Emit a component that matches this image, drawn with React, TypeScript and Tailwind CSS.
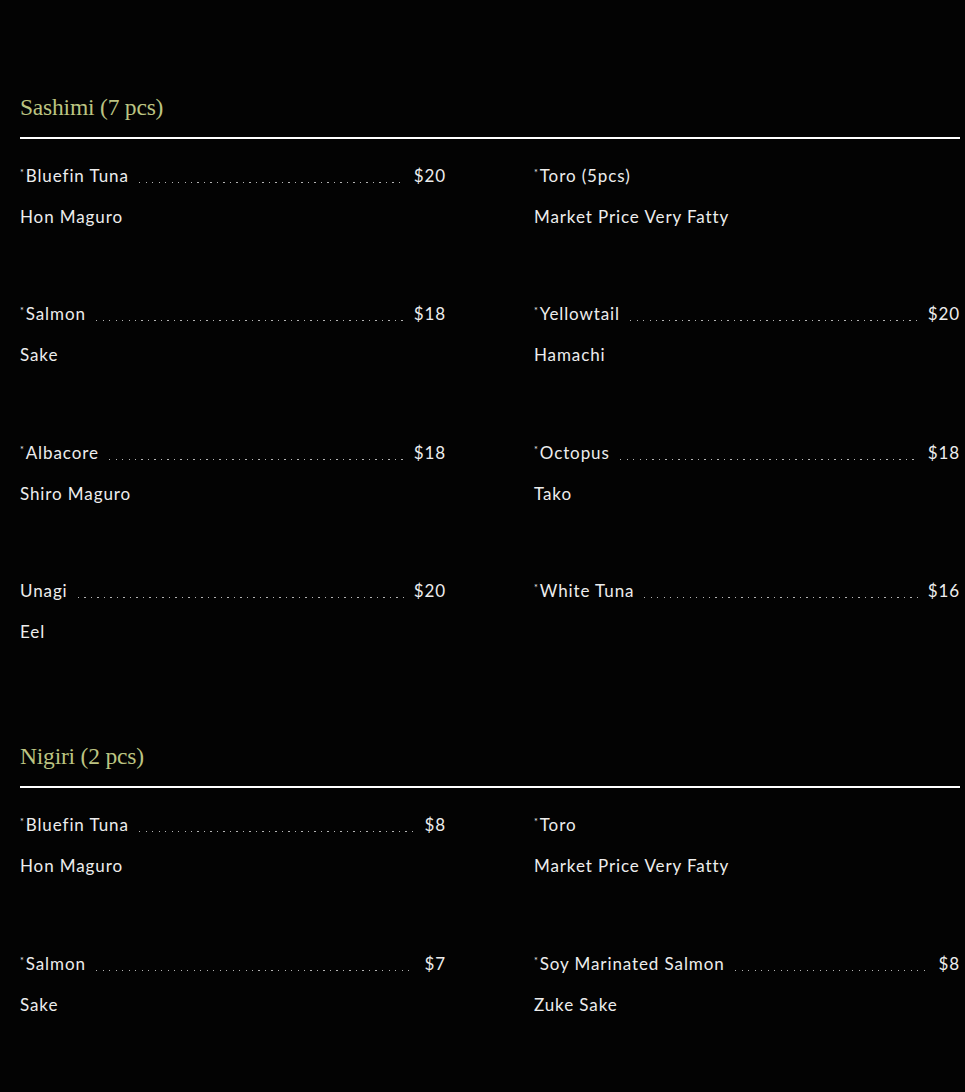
type Item = { name: string; star?: boolean; price?: string; desc: string };

const sashimi: Item[] = [
  { name: 'Bluefin Tuna', star: true, price: '$20', desc: 'Hon Maguro' },
  { name: 'Toro (5pcs)', star: true, desc: 'Market Price Very Fatty' },
  { name: 'Salmon', star: true, price: '$18', desc: 'Sake' },
  { name: 'Yellowtail', star: true, price: '$20', desc: 'Hamachi' },
  { name: 'Albacore', star: true, price: '$18', desc: 'Shiro Maguro' },
  { name: 'Octopus', star: true, price: '$18', desc: 'Tako' },
  { name: 'Unagi', price: '$20', desc: 'Eel' },
  { name: 'White Tuna', star: true, price: '$16', desc: '' },
];

const nigiri: Item[] = [
  { name: 'Bluefin Tuna', star: true, price: '$8', desc: 'Hon Maguro' },
  { name: 'Toro', star: true, desc: 'Market Price Very Fatty' },
  { name: 'Salmon', star: true, price: '$7', desc: 'Sake' },
  { name: 'Soy Marinated Salmon', star: true, price: '$8', desc: 'Zuke Sake' },
];

const MenuItem = ({ item }: { item: Item }) => (
  <div className="flex flex-col">
    <div className="flex items-end h-6 leading-6">
      <span className="whitespace-nowrap">
        {item.star && <span className="text-[9px] align-[6px] mr-[1px]">*</span>}
        {item.name}
      </span>
      {item.price && (
        <>
          <div className="flex-1 mx-[10px] mb-[5px] h-px bg-[repeating-linear-gradient(to_right,#b4b4b4_0px,#b4b4b4_1.2px,transparent_1.2px,transparent_6.5px)]" />
          <span>{item.price}</span>
        </>
      )}
    </div>
    <div className="h-6 leading-6 mt-[17px]">{item.desc}</div>
  </div>
);

const Section = ({ title, items }: { title: string; items: Item[] }) => (
  <section>
    <h2 className="text-[23.5px] leading-8 tracking-[-0.2px] text-[#bcc482] font-['Liberation_Serif',serif]">{title}</h2>
    <div className="mt-[14px] h-[2px] bg-white" />
    <div className="mt-[25px] grid grid-cols-2 gap-x-[88px] gap-y-[73.4px]">
      {items.map((item, i) => (
        <MenuItem key={i} item={item} />
      ))}
    </div>
  </section>
);

export default function App() {
  return (
    <div className="min-h-[1092px] bg-[#030303] text-[#ededed] font-['Lato',sans-serif] text-[17px] tracking-[0.9px] pl-5 pr-[5px] pt-[91px]">
      <Section title="Sashimi (7 pcs)" items={sashimi} />
      <div className="h-[96px]" />
      <Section title="Nigiri (2 pcs)" items={nigiri} />
    </div>
  );
}
